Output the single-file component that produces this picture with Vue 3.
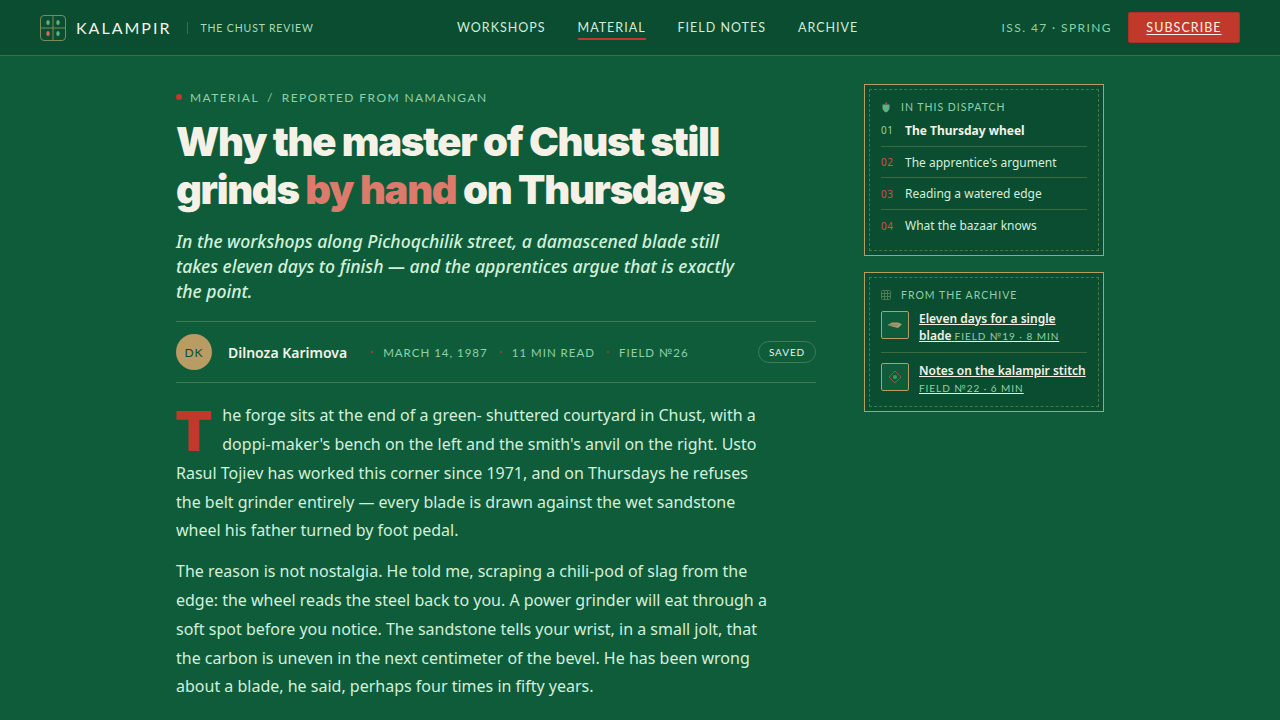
<script setup>
const navItems = [
  { label: 'Workshops' },
  { label: 'Material', active: true },
  { label: 'Field Notes' },
  { label: 'Archive' }
]

const dispatch = [
  { no: '01', title: 'The Thursday wheel', current: true },
  { no: '02', title: "The apprentice's argument" },
  { no: '03', title: 'Reading a watered edge' },
  { no: '04', title: 'What the bazaar knows' }
]
</script>

<template>
  <div class="page">
    <header class="topbar">
      <div class="brand">
        <svg class="logo" width="26" height="26" viewBox="0 0 26 26">
          <rect x="0.5" y="0.5" width="25" height="25" rx="3.5" fill="none" stroke="#7d8a58" />
          <path d="M13 1V25M1 13H25" stroke="#7d8a58" fill="none" />
          <ellipse cx="8" cy="7.5" rx="1.7" ry="2.6" fill="#5fb184" />
          <ellipse cx="18" cy="7.5" rx="1.7" ry="2.6" fill="#5fb184" />
          <ellipse cx="8" cy="18.5" rx="1.7" ry="2.6" fill="#d9695a" />
          <ellipse cx="18" cy="18.5" rx="1.7" ry="2.6" fill="#5fb184" />
        </svg>
        <span class="wordmark">KALAMPIR</span>
        <span class="tagline">THE CHUST REVIEW</span>
      </div>
      <nav class="nav">
        <a v-for="item in navItems" :key="item.label" class="nav-link" :class="{ active: item.active }">{{ item.label }}</a>
      </nav>
      <div class="top-right">
        <span class="issue">ISS. 47 · SPRING</span>
        <a class="subscribe">SUBSCRIBE</a>
      </div>
    </header>

    <main class="layout">
      <article class="story">
        <div class="crumb">
          <span class="crumb-dot"></span>
          <span>MATERIAL</span>
          <span class="crumb-sep">/</span>
          <span>REPORTED FROM NAMANGAN</span>
        </div>
        <h1 class="headline">Why the master of Chust still grinds <span class="accent">by hand</span> on Thursdays</h1>
        <p class="deck">In the workshops along Pichoqchilik street, a damascened blade still takes eleven days to finish — and the apprentices argue that is exactly the point.</p>

        <div class="byline">
          <span class="avatar">DK</span>
          <span class="author">Dilnoza Karimova</span>
          <span class="meta"><i class="tick"></i>MARCH 14, 1987</span>
          <span class="meta"><i class="tick"></i>11 MIN READ</span>
          <span class="meta"><i class="tick"></i>FIELD №26</span>
          <span class="saved">SAVED</span>
        </div>

        <div class="body">
          <p class="lead"><span class="dropcap">T</span>he forge sits at the end of a green- shuttered courtyard in Chust, with a doppi-maker's bench on the left and the smith's anvil on the right. Usto Rasul Tojiev has worked this corner since 1971, and on Thursdays he refuses the belt grinder entirely — every blade is drawn against the wet sandstone wheel his father turned by foot pedal.</p>
          <p>The reason is not nostalgia. He told me, scraping a chili-pod of slag from the edge: the wheel reads the steel back to you. A power grinder will eat through a soft spot before you notice. The sandstone tells your wrist, in a small jolt, that the carbon is uneven in the next centimeter of the bevel. He has been wrong about a blade, he said, perhaps four times in fifty years.</p>
        </div>
      </article>

      <aside class="side">
        <section class="panel">
          <div class="panel-inner">
            <h2 class="panel-title">
              <svg width="10" height="11" viewBox="0 0 10 11">
                <path d="M1.5 2.5H8.5V5.5C8.5 8 7 9.6 5 10.5C3 9.6 1.5 8 1.5 5.5Z" fill="#5fb184" />
                <path d="M4.2 0.5H6.2V3H4.2Z" fill="#a9503c" />
              </svg>
              <span>IN THIS DISPATCH</span>
            </h2>
            <ol class="toc">
              <li v-for="row in dispatch" :key="row.no" class="toc-row" :class="{ current: row.current }">
                <span class="toc-no">{{ row.no }}</span>
                <span class="toc-title">{{ row.title }}</span>
              </li>
            </ol>
          </div>
        </section>

        <section class="panel">
          <div class="panel-inner">
            <h2 class="panel-title">
              <svg width="10" height="10" viewBox="0 0 10 10">
                <rect x="0.5" y="0.5" width="9" height="9" rx="1" fill="none" stroke="#4f7a50" />
                <path d="M3.5 0.5V9.5M6.5 0.5V9.5M0.5 3.5H9.5M0.5 6.5H9.5" stroke="#4f7a50" fill="none" />
              </svg>
              <span>FROM THE ARCHIVE</span>
            </h2>
            <a class="arch-row">
              <span class="thumb">
                <svg width="16" height="8" viewBox="0 0 16 8"><path d="M0.5 4L5 1.6H11L15 3.2L11 7L5 5.4Z" fill="#ad9a72" /><path d="M1 4H11" stroke="#6f7a5a" stroke-width="0.8" /></svg>
              </span>
              <span class="arch-text"><b>Eleven days for a single blade</b> <em>FIELD №19 · 8 MIN</em></span>
            </a>
            <a class="arch-row">
              <span class="thumb">
                <svg width="14" height="14" viewBox="0 0 14 14"><path d="M7 1L13 7L7 13L1 7Z" fill="none" stroke="#8a5a3f" /><circle cx="7" cy="7" r="2" fill="#2ea266" /></svg>
              </span>
              <span class="arch-text"><b>Notes on the kalampir stitch</b> <em class="own-line">FIELD №22 · 6 MIN</em></span>
            </a>
          </div>
        </section>
      </aside>
    </main>
  </div>
</template>

<style>
body {
  background: #0f5c3b;
}
</style>

<style scoped>
.page {
  height: 720px;
  overflow: hidden;
  background: #0f5c3b;
  color: #f5f1e6;
  font-family: "Noto Sans", sans-serif;
}
.topbar {
  height: 55px;
  display: flex;
  justify-content: space-between;
  align-items: center;
  padding: 0 40px;
  background: #0a4d31;
  border-bottom: 1px solid #3d7048;
}
.brand {
  display: flex;
  align-items: center;
}
.logo {
  margin-right: 10px;
}
.wordmark {
  font-family: "Lato", sans-serif;
  font-size: 16px;
  letter-spacing: 2px;
  color: #f5f1e6;
}
.tagline {
  margin-left: 16px;
  padding-left: 12px;
  border-left: 1px solid #3d7048;
  font-family: "Lato", sans-serif;
  font-size: 10.5px;
  letter-spacing: 0.85px;
  color: #a8dcb9;
}
.nav {
  display: flex;
  gap: 32px;
  margin-top: -2px;
}
.nav-link {
  padding: 6px 0 3px;
  border-bottom: 2px solid transparent;
  font-family: "Lato", sans-serif;
  font-size: 12.5px;
  letter-spacing: 1px;
  text-transform: uppercase;
  color: #d5ebd9;
}
.nav-link.active {
  border-bottom-color: #c0392b;
}
.top-right {
  display: flex;
  align-items: center;
  justify-content: flex-end;
  gap: 16px;
}
.issue {
  font-family: "Lato", sans-serif;
  font-size: 12px;
  letter-spacing: 1.4px;
  color: #8fd0a6;
}
.subscribe {
  width: 112px;
  height: 31px;
  box-sizing: border-box;
  display: flex;
  align-items: center;
  justify-content: center;
  background: #c0392b;
  border-radius: 2px;
  border: 1px solid #a93226;
  font-family: "Lato", sans-serif;
  font-size: 12.5px;
  letter-spacing: 1.05px;
  text-decoration: underline;
  text-underline-offset: 2px;
  color: #fdf3e6;
}
.layout {
  display: grid;
  grid-template-columns: 640px 240px;
  gap: 48px;
  justify-content: center;
  padding-top: 27px;
}
.crumb {
  display: flex;
  align-items: center;
  gap: 8px;
  height: 28px;
  margin-bottom: 7px;
  font-family: "Lato", sans-serif;
  font-size: 12px;
  letter-spacing: 1.42px;
  color: #8fd0a6;
}
.crumb-dot {
  width: 6px;
  height: 6px;
  border-radius: 50%;
  background: #c0392b;
}
.headline {
  margin: 0;
  max-width: 600px;
  font-family: "Inter", sans-serif;
  font-size: 40px;
  font-weight: 900;
  line-height: 48px;
  letter-spacing: -1.3px;
  color: #f5f1e6;
}
.accent {
  color: #de7a6c;
}
.deck {
  margin: 15px 0 17px;
  max-width: 580px;
  font-size: 17.6px;
  font-style: italic;
  font-weight: 500;
  line-height: 25px;
  color: #d2f0da;
}
.byline {
  height: 60px;
  display: flex;
  align-items: center;
  border-top: 1px solid #3f7a50;
  border-bottom: 1px solid #3f7a50;
}
.avatar {
  width: 36px;
  height: 36px;
  flex: none;
  display: flex;
  align-items: center;
  justify-content: center;
  border-radius: 50%;
  background: #b89c63;
  font-family: "Lato", sans-serif;
  font-size: 12px;
  letter-spacing: 1px;
  color: #0a4d31;
}
.author {
  margin: 0 24px 0 16px;
  font-size: 14px;
  font-weight: 600;
  color: #f5f1e6;
}
.meta {
  display: inline-flex;
  align-items: center;
  margin-right: 12px;
  font-family: "Lato", sans-serif;
  font-size: 11.5px;
  letter-spacing: 1px;
  color: #8fd0a6;
}
.tick {
  width: 2px;
  height: 2px;
  margin-right: 10px;
  border-radius: 50%;
  background: #c0392b;
}
.saved {
  margin-left: auto;
  width: 58px;
  height: 22px;
  display: flex;
  align-items: center;
  justify-content: center;
  box-sizing: border-box;
  border: 1px solid #3f7a50;
  border-radius: 11px;
  font-family: "Lato", sans-serif;
  font-size: 10px;
  letter-spacing: 0.9px;
  color: #e4f4e7;
}
.body {
  max-width: 600px;
  padding-top: 18.3px;
  font-size: 16px;
  line-height: 28.8px;
  color: #d2f0da;
}
.body p {
  margin: 0 0 12px;
}
.dropcap {
  float: left;
  margin: 5px 9.5px 0 -1px;
  font-family: "Inter", sans-serif;
  font-size: 55px;
  font-weight: 900;
  line-height: 50px;
  color: #c0392b;
}
.side {
  display: flex;
  flex-direction: column;
  gap: 16px;
  margin-top: 1px;
}
.panel {
  border: 1px solid #b89c63;
  background: #0a4d31;
  padding: 4px;
}
.panel-inner {
  border: 1px dashed #3f7a50;
  padding: 11px 11px 8px;
}
.panel-title {
  display: flex;
  align-items: center;
  gap: 10px;
  height: 12px;
  margin: 0 0 2px;
  font-family: "Lato", sans-serif;
  font-size: 10.5px;
  font-weight: 400;
  letter-spacing: 1px;
  color: #8fd0a6;
}
.toc {
  list-style: none;
  margin: 0;
  padding: 0;
}
.toc-row {
  display: flex;
  align-items: center;
  box-sizing: border-box;
  height: 31.7px;
  border-bottom: 1px solid #3d6a3f;
  font-size: 12px;
  color: #d2f0da;
}
.toc-row:last-child {
  border-bottom: 0;
}
.toc-no {
  width: 24px;
  font-size: 10px;
  letter-spacing: 0.5px;
  color: #c9564a;
}
.current .toc-no {
  color: #8fd0a6;
}
.current .toc-title {
  font-weight: 700;
  color: #f5f1e6;
}
.arch-row {
  display: flex;
  gap: 10px;
  padding: 7px 0;
  border-bottom: 1px solid #3d6a3f;
}
.arch-row:last-child {
  border-bottom: 0;
  padding: 9px 0 1px;
}
.thumb {
  width: 28px;
  height: 28px;
  flex: none;
  margin-top: 1px;
  display: flex;
  align-items: center;
  justify-content: center;
  box-sizing: border-box;
  border: 1px solid #b89c63;
  border-radius: 2px;
  background: #0f5c3b;
}
.arch-text {
  font-size: 12px;
  line-height: 17px;
  text-decoration: underline;
  color: #f5f1e6;
}
.arch-text b {
  font-weight: 600;
}
.arch-text em {
  font-family: "Lato", sans-serif;
  font-style: normal;
  font-size: 10px;
  letter-spacing: 0.95px;
  color: #8fd0a6;
}
.own-line {
  display: block;
  line-height: 18px;
}
</style>
